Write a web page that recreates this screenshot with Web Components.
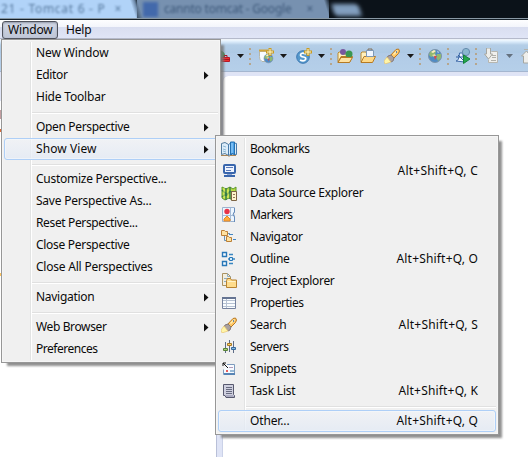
<!DOCTYPE html>
<html lang="en"><head><meta charset="utf-8"><title>Window menu</title>
<style>html,body{margin:0;width:528px;height:457px;overflow:hidden;font:12px/22px "Noto Sans","Open Sans",sans-serif;color:#0a0a0a}</style></head>
<body>
<ide-window></ide-window>
<script>
const FOLDER='<path d="M1 14V5l1-1h4l1 2h6v3" fill="#fff0bd" stroke="#b98a35"/><path d="M1 14.500l3-6h11.500l-3 6z" fill="#ffd987" stroke="#b57a24"/>';
const GLOBE='<circle cx="8" cy="8" r="6.500" fill="#4f8ac4" stroke="#7d95ab"/><path d="M3 4l4-2 2 2-2 4-3 1-2-2zM10 6l4 0v4l-3 3-2-4z" fill="#8fb873"/><path d="M4 4l3-2 2 1-3 2z" fill="#fff0c0"/><path d="M5 7l3-1 1 2-2 1z" fill="#e6d9a0"/><path d="M7 8l3 0-2 4z" fill="#d7484b"/><path d="M10 3l2 1-1 1z" fill="#e8eef2"/>';
const SPARK='<path d="M12 0v8M8 4h8" stroke="#c99b22" stroke-width="3"/><path d="M12 1v6M9 4h6" stroke="#fffbd5"/>';
const TORCH='<path d="M6 8l6-6.500 2.500-.500 1 2-1 2.500L9 11z" fill="#ffc766" stroke="#b97922"/><path d="M9.500 6.500l4-4" stroke="#fff0b5" stroke-width="1.500"/><path d="M4 8l3-1 3 3-1 3-2 1-4-4z" fill="#aaa19f" stroke="#857b7b"/><path d="M3 9l4 5-6 2-1-3z" fill="#fff5a8" stroke="#e6bd67" stroke-width=".6"/><path d="M12 4h1" stroke="#386aa5" stroke-width="1.500"/>';
const ICONS={
bookmarks:'<path d="M.5 2.500L4 1.500l3.500 2v11l-3.500-2-3.500 1z" fill="#dcecf9" stroke="#527b9e"/><path d="M7.500 3.500l3-2 5 1v11l-4.500-.500-3.500 1.500z" fill="#d7ebfb" stroke="#467aab"/><path d="M9.500 1h4v13l-2-2-2 3z" fill="#4aa1e6" stroke="#2470b1"/><path d="M11 2v10" stroke="#a5d6ff"/><path d="M2 5l3 1M2 8l3 1M2 10l3 1" stroke="#8db8d5"/><path d="M0 14.500h7l1 1 1-1h6" fill="none" stroke="#a88355"/>',
console:'<rect x="3" y="2" width="11" height="8" rx="1" fill="#eef4ff" stroke="#3966ad" stroke-width="2"/><path d="M5 4.500h7M5 7.500h5" stroke="#5b79b7"/><path d="M6 11.500h5" stroke="#8ca5d2"/><path d="M3 13h11" stroke="#3966ad" stroke-width="2"/>',
data:'<path d="M1 2l4 2 4-2 3 2 3-2v11l-4 2-3-2-4 2-3-2z" fill="#b7dc42" stroke="#5f982d"/><path d="M5 3v12M9 2v12M1 5l5 5 3-4 5 2M1 12l5-4" fill="none" stroke="#367c49" stroke-width="1.400"/><path d="M3 3v10M7 5v8" stroke="#e7ef66"/><path d="M10.500 6.500h5v9h-5z" fill="#fff4cb" stroke="#7d6445"/><path d="M12 9.500h2M12 12.500h2" stroke="#8f7758"/>',
markers:'<path d="M1.500.500h12v4q-2 2 0 5v5h-12z" fill="#edf6ff" stroke="#9bb2ce"/><path d="M2 8.500h11M9.500 1v14" stroke="#a6bcd7"/><circle cx="6" cy="4.500" r="2.700" fill="#e83448"/><path d="M3 14v-2l3-3 3 3v2z" fill="#ffad3d" stroke="#e78722"/><path d="M13.500 1v4q-3 2 0 5v5" fill="none" stroke="#668bba"/>',
navigator:'<path d="M3.500 6v5.500h3M7 4.500h2" stroke="#6c93b0" fill="none"/><path d="M.500 1.500h3l1 1h2v4h-6z" fill="#ffe2a0" stroke="#bb8037"/><path d="M5.500 7.500h2l1 1h2v4h-5z" fill="#ffe2a0" stroke="#bb8037"/><path d="M8 5.500h4M12 10.500h3" stroke="#4387c2"/>',
outline:'<path d="M1.500 1.500h4v4h-4zM1.500 10.500h4v4h-4z" fill="#f4fbff" stroke="#2877b8" stroke-width="1.400"/><path d="M8 3.500h4M8 12.500h4M7 8h2M12 8h2" stroke="#3786c1" stroke-width="1.300"/><path d="M8.500 6.500h3v3h-3z" fill="#cdecff" stroke="#2877b8"/>',
project:'<path d="M1.500.500h5l3 3v9h-8z" fill="#f2eedf" stroke="#ab9362"/><path d="M6.500.500v3h3M3 5.500h4M3 8.500h2" fill="none" stroke="#8eacc1"/><path d="M5.500 7.500l1-2h3l1 1.500h5v7.500h-10z" fill="#ffdc8b" stroke="#b88331"/><path d="M6.500 8.500h8" stroke="#fff3ca"/>',
properties:'<path d="M1.500 2.500h13v11h-13z" fill="#fafdff" stroke="#75829f"/><path d="M1 3h14" stroke="#657492" stroke-width="2"/><path d="M2 5.500h12M2 8.500h12M2 11.500h12M5.500 4v9" stroke="#b6c2d3"/>',
search:TORCH,
servers:'<path d="M4.500 3v11M8.500 1v12M12.500 2v12" stroke="#5d6c86"/><path d="M2.500 9.500h4v2h-4z" fill="#a9cd70" stroke="#588237"/><path d="M6.500 4.500h4v2h-4z" fill="#ffd568" stroke="#a77827"/><path d="M10.500 8.500h4v2h-4z" fill="#82b6df" stroke="#366a9d"/>',
snippets:'<path d="M6 3.500h7.500v10h-11v-5" fill="#f8fbff" stroke="#7d9bbd"/><path d="M7 7L2 2M2 5V2h3" fill="none" stroke="#111"/><path d="M8 6.500h4" stroke="#b59cb9"/><path d="M5 9h2v2H5z" fill="#e85c59"/><path d="M9 9h4v2H9z" fill="#98bad7"/><path d="M3 13h11" stroke="#5885b5" stroke-width="2"/>',
tasks:'<path d="M2.500 1.500h10v10l1 1v2H5l-1-2H2.500z" fill="#cfd0df" stroke="#57596e"/><path d="M5 4.500h6M5 6.500h6M5 8.500h6M5 10.500h6" stroke="#686b80"/><path d="M5 14l8 0-1-2H5z" fill="#ababc1"/>',
webproj:'<path d="M1.500 3.500h9v10H4q-3-2-2.500-5z" fill="#f8fbff" stroke="#b5b6aa"/><path d="M1 2.500h9" stroke="#d1a53c" stroke-width="2"/><g transform="translate(5 5) scale(.68)">'+GLOBE+'</g>'+SPARK,
servlet:'<circle cx="7" cy="9" r="6.300" fill="#5598cb" stroke="#3c78b3"/><path d="M10 6Q5 4 4.500 7q0 1.500 3 2t2 2.500Q8 14 4 12" fill="none" stroke="#fff" stroke-width="1.700"/>'+SPARK,
openType:FOLDER+'<circle cx="6" cy="4" r="3" fill="#77579e"/><circle cx="12" cy="6" r="3.500" fill="#3b9650"/><path d="M1 14.500l3-5h11.500l-3 5z" fill="#ffe1a0" stroke="#b57a24"/>',
openTask:FOLDER+'<path d="M6.500 2.500h7v6h-7z" fill="#f0f6ff" stroke="#7e99b6"/><path d="M8 2V1h4v1" fill="none" stroke="#81715b"/>',
globe:GLOBE,
run:'<path d="M1 13q3 0 3.500-8h3l2 9z" fill="#e9f4ff" stroke="#3f6aa8"/><path d="M1 9h7M3 7l6 6" stroke="#305fa0"/><circle cx="11" cy="4" r="3.600" fill="#8ab8d0" stroke="#668aad"/><path d="M8.500 7l6.500 4-6.500 4.500z" fill="#24a64c" stroke="#148238"/>',
next:'<path d="M7.500 3.500h6v11h-9v-3" fill="#f0f0ed" stroke="#b6b6b0"/><path d="M8 7.500h4M8 9.500h4M7 12.500h5" stroke="#b0b0aa"/><path d="M2.500 0h4v6h2l-4 5-4-5h2z" fill="#eeeeea" stroke="#a7a7a0"/>',
prev:'<path d="M4 1.500h10M6 14.500h8M9 10.500h4" stroke="#b4b4ae"/><path d="M3.500 15V8h-2l5-5 4 5h-2v7z" fill="#efefec" stroke="#a7a7a0"/>',
stop:'<path d="M0 2q6 2 5 8H0z" fill="#2d8f45"/><path d="M1.500 9.500h8v4h-8z" fill="#ef2d2d" stroke="#b81826"/><path d="M4 9V7.500h3V9M1 11.500h9" fill="none" stroke="#a81321"/>'
};
const define=(name,css,html,after)=>customElements.define(name,class extends HTMLElement{
 connectedCallback(){ if(this.shadowRoot)return; const s=this.attachShadow({mode:'open'}); s.innerHTML=`<style>${css}</style>${typeof html==='function'?html(this):html}`; if(after)after(this,s);}
});
define('ui-icon',':host{display:block;width:16px;height:16px;flex:none}svg{display:block}',e=>`<svg width="16" height="16" viewBox="0 0 16 16" fill="none">${ICONS[e.getAttribute('name')]||''}</svg>`);
/* Label whose tracking is tuned so that it fills the given width. */
define('fit-text',':host{display:block;white-space:nowrap;flex:none}span{display:inline-block}','<span><slot></slot></span>',(e,s)=>{
 const sp=s.querySelector('span'),w=+e.getAttribute('w'),n=e.textContent.length;
 sp.style.letterSpacing=((w+.5-sp.getBoundingClientRect().width)/n).toFixed(3)+'px';
});
define('menu-item',`:host{display:flex;align-items:center;height:22px;box-sizing:border-box;border:1px solid transparent;border-radius:3px;padding:0 17px 0 5px}
:host([active]){border-color:#aecff7;background:linear-gradient(#f0f3f899,#e3eaf5cc);box-shadow:inset 0 0 0 1px #f5f8fc99}
ui-icon{margin-right:13px;margin-left:-3px;visibility:hidden}:host([icon]) ui-icon{visibility:visible}
fit-text{height:22px;line-height:22px}.space{flex:1}.arrow{display:none}:host([sub]) .arrow{display:block;margin-right:-9px}`,
e=>`<ui-icon name="${e.getAttribute('icon')||''}"></ui-icon><fit-text w="${e.getAttribute('w')}">${e.getAttribute('label')}</fit-text><div class="space"></div>${e.hasAttribute('key')?`<fit-text w="${e.getAttribute('kw')}">${e.getAttribute('key')}</fit-text>`:''}<svg class="arrow" width="5" height="9"><path d="M0 .5l4.500 4L0 8.500z" fill="#111"/></svg>`);
define('menu-separator',':host{display:block;height:8px;padding:4px 0 0 28px;box-sizing:border-box}div{height:1px;background:#e0e0e0;border-bottom:1px solid #fff}','<div></div>');
define('menu-panel',`:host{display:block;position:absolute;box-sizing:border-box;border:1px solid #979797;padding:2px;
background:linear-gradient(90deg,transparent 28px,#e2e3e3 28px,#e2e3e3 29px,#fff 29px,#fff 30px,transparent 30px) 0 2px/100% calc(100% - 4px) no-repeat,#f0f0f0;box-shadow:inset 0 0 0 1px #f5f5f5}
:host::before{content:"";position:absolute;left:5px;top:5px;right:-4px;bottom:-4px;z-index:-1;background:#777;opacity:.82;filter:blur(.8px)}`,'<slot></slot>');
define('tool-separator',':host{display:block;width:2px;height:17px;background:repeating-linear-gradient(#b6a68d 0 2px,transparent 2px 5px)}','');
/* [kind, left edge] of every item; v and g are drop-down arrows, | is a separator. */
const TOOLS=[['stop',220],['v',237],['|',249],['webproj',258],['v',280],['servlet',296],['v',318],['|',330],['openType',337],['openTask',360],['search',384],['v',407],['|',419],['globe',427],['|',447],['run',455],['|',475],['next',484],['g',506],['prev',520]];
define('tool-strip',`:host{display:flex;align-items:center;height:33px;box-sizing:border-box;padding-bottom:1px;overflow:hidden;background:linear-gradient(#f0f8ff 0,#d8e9f9 2px,#b4cee7 5px,#adc9e4 13px,#b1cbe7 13px,#b5cfe9 31px,#a4b6d0 31px,#a4b6d0 32px,#dfe4f4 32px)}div{flex:none}svg{display:block}`,()=>{
 let x=0,h='';
 for(const [k,p] of TOOLS){const w=k==='|'?2:k==='v'||k==='g'?7:16;
  const inner=k==='|'?'<tool-separator></tool-separator>':w===7?`<svg width="7" height="4" opacity="${k==='g'?.5:1}"><path d="M0 0h7L3.500 4z" fill="#191919"/></svg>`:`<ui-icon name="${k}"></ui-icon>`;
  h+=`<div style="width:${w}px;margin-left:${p-x}px">${inner}</div>`;x=p+w;}
 return h;});
define('browser-tabs',`:host{display:grid;grid-template-columns:137px 192px 1fr;height:18px;overflow:hidden;background:linear-gradient(90deg,#7791b0 145px,#0b1219 145px);background:#0b1219;font-size:12px;line-height:18px;white-space:nowrap}
.tab{display:flex;align-items:center;height:18px;box-sizing:border-box}
.a{background:linear-gradient(72deg,#b1d3f8 0 129px,#6f8aaa 133px,#1c2935 136px);color:#587a9f}.b{background:linear-gradient(72deg,#3e5268 0,#7791b0 6px,#7791b0 183px,#0b1219 189px);color:#3f5a7b}
.t{filter:blur(1.100px)}i{width:15px;height:15px;background:#4269ab;margin:0 6px 0 6px;filter:blur(1.500px)}
.c{width:27px;height:12px;margin:4px 0 0 4px;background:#829fbf;border-radius:3px;transform:skewX(18deg);filter:blur(2px)}`,
'<div class="tab a"><fit-text class="t" w="104" style="margin-left:1px">21 - Tomcat 6 - P</fit-text><span class="t" style="margin-left:9px">×</span></div><div class="tab b"><i></i><fit-text class="t" w="127">cannto tomcat - Google</fit-text><span class="t" style="margin-left:15px">×</span></div><div class="c"></div>');
define('menu-bar',`:host{display:flex;align-items:center;height:22px;box-sizing:border-box;border-top:1px solid #8998a4;box-shadow:inset 0 1px #152029;background:linear-gradient(#fff 0,#f3f5fb 8px,#d9def0 8px,#e0e5f6 19px,#b5bacb 19px,#b5bacb 20px,#edf2f8 20px);line-height:18px}
.on{width:56px;height:18px;box-sizing:border-box;margin:0 8px 0 2px;padding-left:5px;border:1px solid #50535d;border-radius:3px;background:linear-gradient(#d2d7e4,#bfc6d7);box-shadow:inset 0 1px 2px #9198a9}.on fit-text{line-height:16px}`,
'<div class="on"><fit-text w="44">Window</fit-text></div><fit-text w="25">Help</fit-text>');
define('editor-area',`:host{display:grid;grid-template-columns:217px 1fr;column-gap:5px;height:385px;background:#dfe4f6}
.l{background:linear-gradient(#dfe4f6 0 28px,#fff 28px);border-right:1px solid #b9c0d8}.r{margin-top:3px;background:#fff;border-top-left-radius:6px;border-left:1px solid #cbd2e8}
svg{display:block}`,
'<div class="l"><svg width="1" height="300"><path d="M0 37h1v9H0z" fill="#c29da0"/><path d="M0 56h1v3H0z" fill="#db6a37"/><path d="M0 200h1v3H0z" fill="#ffc45b"/></svg></div><div class="r"></div>');
const m=(label,w,o='')=>`<menu-item label="${label}" w="${w}" ${o}></menu-item>`,S='<menu-separator></menu-separator>';
const k=(c,w)=>`key="Alt+Shift+Q, ${c}" kw="${w}"`;
define('ide-window',`:host{display:block;position:relative;width:528px;height:457px;overflow:hidden;isolation:isolate}
.layer{position:absolute;isolation:isolate}.one{left:1px;top:39px;width:220px;height:324px}.two{left:215px;top:135px;width:284px;height:300px}menu-panel{width:100%;height:100%}`,
()=>`<browser-tabs></browser-tabs><menu-bar></menu-bar><tool-strip></tool-strip><editor-area></editor-area>
<div class="layer one"><menu-panel>${m('New Window',72)}${m('Editor',31,'sub')}${m('Hide Toolbar',69)}${S}${m('Open Perspective',93,'sub')}${m('Show View',60,'sub active')}${S}${m('Customize Perspective...',130)}${m('Save Perspective As...',115)}${m('Reset Perspective...',101)}${m('Close Perspective',93)}${m('Close All Perspectives',116)}${S}${m('Navigation',58,'sub')}${S}${m('Web Browser',70,'sub')}${m('Preferences',61)}</menu-panel></div>
<div class="layer two"><menu-panel>${m('Bookmarks',59,'icon="bookmarks"')}${m('Console',43,'icon="console" '+k('C',80))}${m('Data Source Explorer',113,'icon="data"')}${m('Markers',42,'icon="markers"')}${m('Navigator',52,'icon="navigator"')}${m('Outline',39,'icon="outline" '+k('O',81))}${m('Project Explorer',84,'icon="project"')}${m('Properties',53,'icon="properties"')}${m('Search',36,'icon="search" '+k('S',79))}${m('Servers',38,'icon="servers"')}${m('Snippets',46,'icon="snippets"')}${m('Task List',45,'icon="tasks" '+k('K',79))}${S}${m('Other...',39,'active '+k('Q',81))}</menu-panel></div>`);
</script>
</body></html>
